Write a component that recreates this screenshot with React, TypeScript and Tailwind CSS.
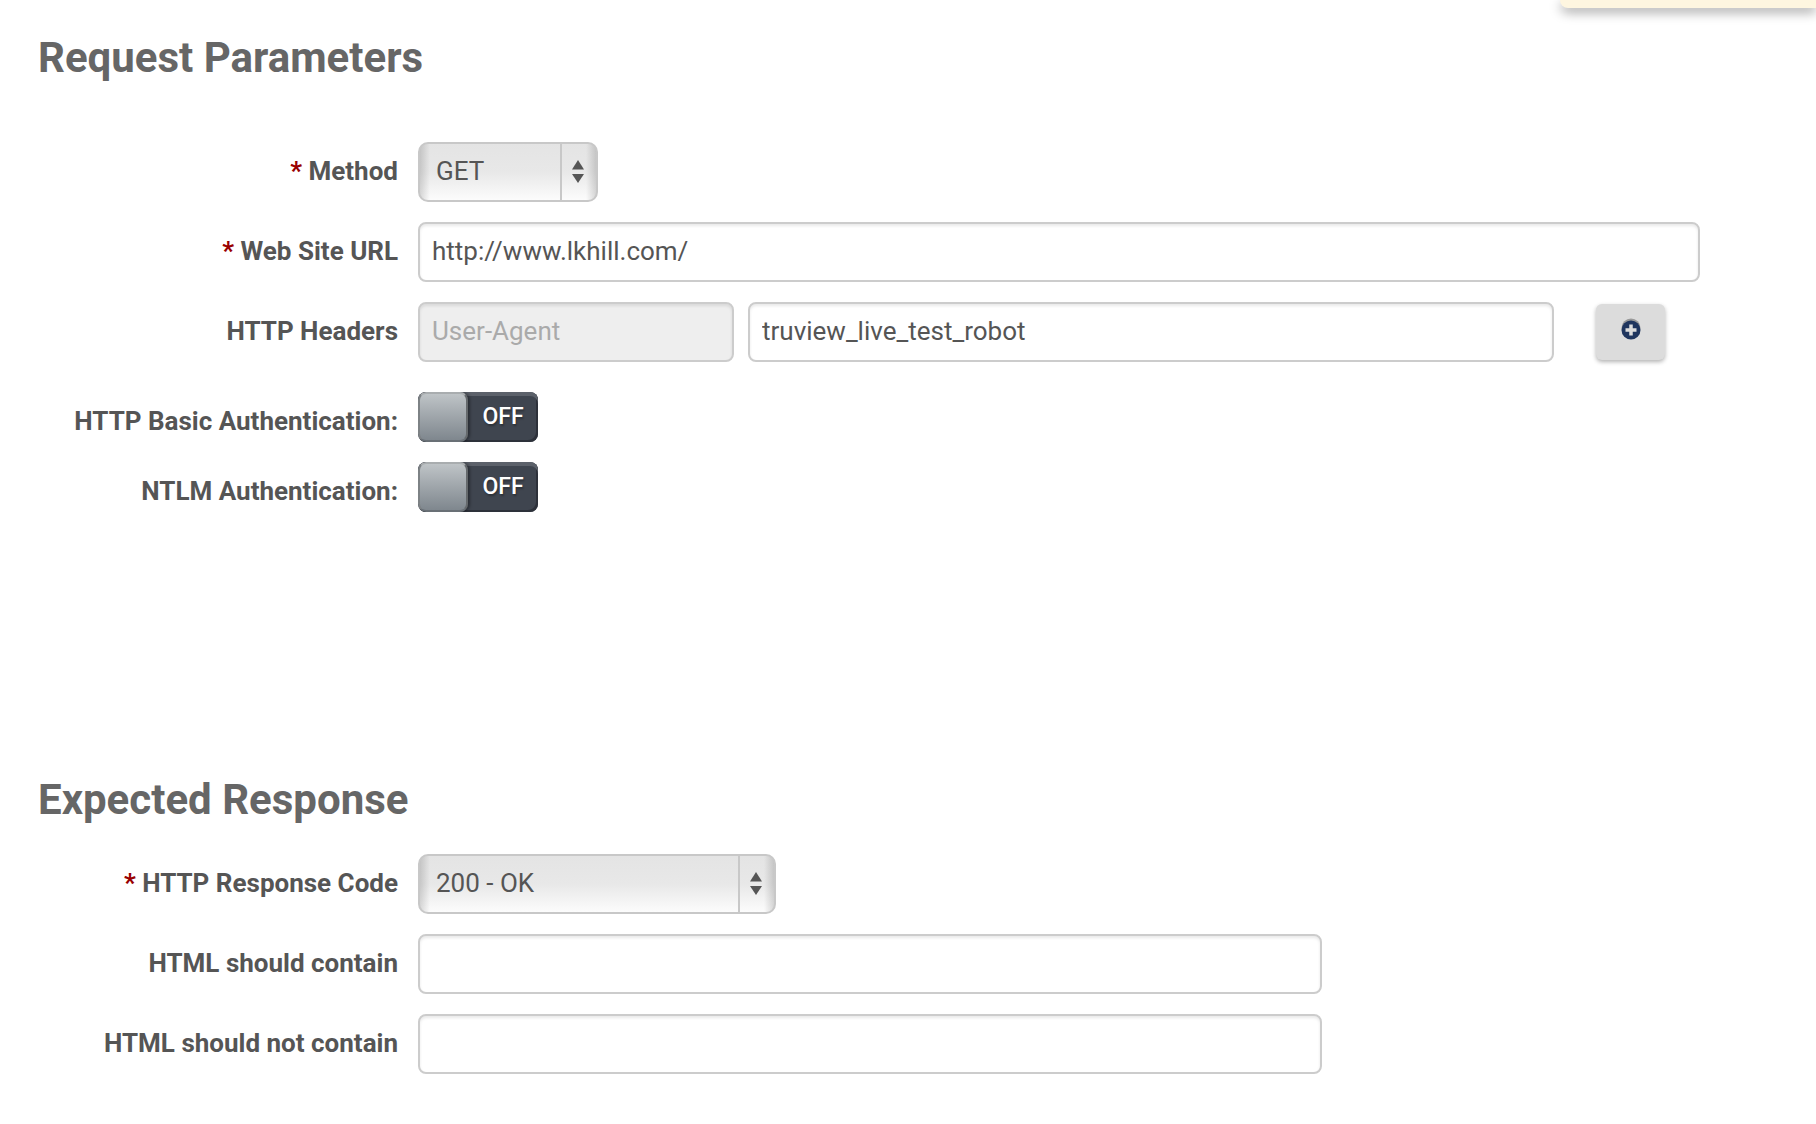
import type { ReactNode } from "react";

const inputClass =
  "h-[60px] min-w-0 rounded-lg border-2 border-[#cccccc] bg-white px-3 pb-0.5 text-[26px] text-[#555555] shadow-[inset_0_2px_3px_rgba(0,0,0,0.09)] outline-none focus:border-[#8fb4dc]";

function Heading({ children }: { children: ReactNode }) {
  return <h2 className="text-[42px] leading-[52px] font-bold text-[#666666]">{children}</h2>;
}

function Row({
  id,
  label,
  required,
  children,
}: {
  id: string;
  label: string;
  required?: boolean;
  children: ReactNode;
}) {
  return (
    <div className="flex items-start gap-5">
      <label
        htmlFor={id}
        className="w-[360px] shrink-0 pt-3 text-right text-[26px] leading-[34px] font-bold whitespace-nowrap text-[#555555]"
      >
        {required && <span className="text-[#990000]">* </span>}
        {label}
      </label>
      {children}
    </div>
  );
}

function Select({ id, width, options }: { id: string; width: string; options: string[] }) {
  return (
    <div className={`relative max-w-full ${width}`}>
      <select
        id={id}
        className="h-[60px] w-full appearance-none rounded-[10px] border-2 border-[#c8c8c8] bg-[linear-gradient(to_right,rgba(0,0,0,0.14),transparent_10px,transparent_calc(100%-10px),rgba(0,0,0,0.14)),linear-gradient(to_bottom,#e4e4e4,#e8e8e8_50%,#fcfcfc)] pr-10 pb-0.5 pl-4 text-[26px] text-[#555555] outline-none"
      >
        {options.map((o) => (
          <option key={o}>{o}</option>
        ))}
      </select>
      <span className="pointer-events-none absolute inset-y-0.5 right-0 flex w-[38px] items-center border-l-2 border-[#c8c8c8] pl-2.5">
        <svg width="12" height="24" viewBox="0 0 12 24" className="fill-[#555555]" aria-hidden="true">
          <path d="M6 0 12 9.5H0z" />
          <path d="M0 14h12L6 23z" />
        </svg>
      </span>
    </div>
  );
}

function Toggle({ id }: { id: string }) {
  return (
    <span className="relative flex h-[50px] w-[120px] overflow-hidden rounded-lg bg-[#3f454f] shadow-[inset_0_4px_0_#5c616a,inset_-2px_-2px_0_#2d313a]">
      <input
        id={id}
        type="checkbox"
        role="switch"
        className="absolute inset-0 z-10 h-full w-full cursor-pointer appearance-none"
      />
      <span className="w-[50px] rounded-lg border-2 border-t-[#a9adaf] border-r-[#65696c] border-b-[#697076] border-l-[#7d8285] bg-linear-to-b from-[#bfc4c7] to-[#7f878e] shadow-[2px_0_3px_rgba(0,0,0,0.35)]" />
      <span className="flex-1 text-center text-[23px] leading-[50px] font-medium text-white [text-shadow:1px_2px_2px_rgba(0,0,0,0.3)]">
        OFF
      </span>
    </span>
  );
}

export default function App() {
  return (
    <main className="relative min-h-screen overflow-hidden bg-white pr-[116px] pb-12 pl-[38px] font-[Roboto,sans-serif]">
      <div className="absolute top-0 right-0 h-2 w-64 rounded-bl-lg bg-[#fef6e0] shadow-[0_4px_12px_rgba(0,0,0,0.4)]" />

      <section className="pt-8">
        <Heading>Request Parameters</Heading>
        <div className="mt-[58px] flex flex-col gap-5">
          <Row id="method" label="Method" required>
            <Select id="method" width="w-[180px]" options={["GET", "POST"]} />
          </Row>
          <Row id="url" label="Web Site URL" required>
            <input id="url" type="text" defaultValue="http://www.lkhill.com/" className={`${inputClass} flex-1`} />
          </Row>
          <Row id="header-value" label="HTTP Headers">
            <div className="flex min-w-0 flex-1 pr-[35px]">
              <input
                type="text"
                aria-label="Header name"
                value="User-Agent"
                disabled
                className="mr-3.5 h-[60px] w-[316px] min-w-0 rounded-lg border-2 border-[#cccccc] bg-[#eeeeee] px-3 pb-0.5 text-[26px] text-[#aaaaaa] shadow-[inset_0_2px_3px_rgba(0,0,0,0.09)]"
              />
              <input
                id="header-value"
                type="text"
                defaultValue="truview_live_test_robot"
                className={`${inputClass} flex-1`}
              />
              <button
                type="button"
                aria-label="Add header"
                className="mt-0.5 ml-[42px] flex h-14 w-[69px] shrink-0 items-center justify-center rounded-md bg-[#dcdcdc] pb-1.5 shadow-[0_2px_4px_rgba(0,0,0,0.3)]"
              >
                <svg width="20" height="22" viewBox="0 0 20 22" aria-hidden="true">
                  <circle cx="10" cy="10" r="9.5" fill="#999999" />
                  <circle cx="10" cy="12" r="9.5" fill="#1f355e" />
                  <path d="M10 6.5v11M4.500 12h11" stroke="#dcdcdc" strokeWidth="3.500" />
                </svg>
              </button>
            </div>
          </Row>
        </div>
        <div className="mt-[30px] flex flex-col gap-5">
          <Row id="basic-auth" label="HTTP Basic Authentication:">
            <Toggle id="basic-auth" />
          </Row>
          <Row id="ntlm-auth" label="NTLM Authentication:">
            <Toggle id="ntlm-auth" />
          </Row>
        </div>
      </section>

      <section className="mt-[262px]">
        <Heading>Expected Response</Heading>
        <div className="mt-7 flex flex-col gap-5">
          <Row id="code" label="HTTP Response Code" required>
            <Select id="code" width="w-[358px]" options={["200 - OK", "404 - Not Found"]} />
          </Row>
          <Row id="contain" label="HTML should contain">
            <input id="contain" type="text" className={`${inputClass} w-[904px]`} />
          </Row>
          <Row id="not-contain" label="HTML should not contain">
            <input id="not-contain" type="text" className={`${inputClass} w-[904px]`} />
          </Row>
        </div>
      </section>
    </main>
  );
}
